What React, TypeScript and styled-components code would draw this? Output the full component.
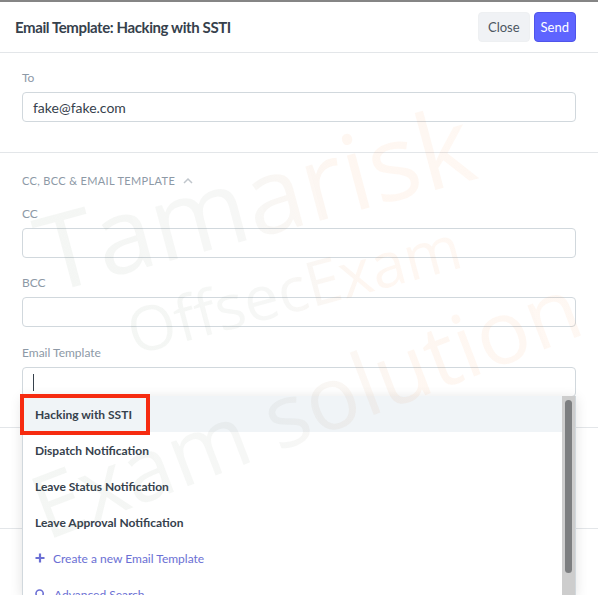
import React from "react";
import styled, { createGlobalStyle } from "styled-components";

const Global = createGlobalStyle`
  html, body { margin: 0; padding: 0; background: #fff; }
  body { font-family: Lato, "Noto Sans", sans-serif; overflow: hidden; }
  * { box-sizing: border-box; }
`;

const Page = styled.div`
  position: relative;
  width: 598px;
  height: 595px;
  overflow: hidden;
  background: #fff;
`;

const Backdrop = styled.div`
  height: 2px;
  background: #858585;
`;

const Modal = styled.div`
  display: flex;
  flex-direction: column;
  background: #fff;
`;

const Header = styled.div`
  height: 51px;
  display: flex;
  align-items: center;
  justify-content: space-between;
  padding: 0 22px 0 15px;
  border-bottom: 1px solid #e3e6e9;
`;

const Title = styled.h4`
  margin: 0;
  font-size: 15px;
  letter-spacing: -0.4px;
  font-weight: 700;
  color: #36414c;
`;

const Actions = styled.div`
  display: flex;
  gap: 4px;
`;

const Button = styled.button<{ $primary?: boolean }>`
  height: 30px;
  padding: 0 ${(p) => (p.$primary ? 6 : 9)}px;
  border: 1px solid ${(p) => (p.$primary ? "#4f54ea" : "#eef0f2")};
  border-radius: 4px;
  font-family: Lato, "Noto Sans", sans-serif;
  font-size: 13px;
  color: ${(p) => (p.$primary ? "#fff" : "#4c5661")};
  background: ${(p) => (p.$primary ? "#5e64ff" : "#f0f2f5")};
`;

const Section = styled.div<{ $pt: number; $pb: number; $line?: boolean }>`
  display: flex;
  flex-direction: column;
  padding: ${(p) => p.$pt}px 22px ${(p) => p.$pb}px;
  border-bottom: ${(p) => (p.$line ? "1px solid #e3e6e9" : "none")};
`;

const SectionHead = styled.div`
  display: flex;
  align-items: center;
  gap: 8px;
  height: 18px;
  font-size: 11px;
  letter-spacing: 0.35px;
  color: #8d99a6;
  text-transform: uppercase;
  margin-bottom: 16px;
`;

const Field = styled.div<{ $gap: number }>`
  position: relative;
  display: flex;
  flex-direction: column;
  margin-bottom: ${(p) => p.$gap}px;
`;

const Label = styled.label`
  height: 18px;
  line-height: 18px;
  font-size: 12px;
  color: #8d99a6;
  margin-bottom: 5px;
`;

const Input = styled.div`
  height: 30px;
  border: 1px solid #d1d8dd;
  border-radius: 4px;
  padding: 0 10px;
  display: flex;
  align-items: center;
  font-size: 14px;
  color: #36414c;
  background: #fff;
`;

const Caret = styled.span`
  width: 1px;
  height: 17px;
  background: #36414c;
`;

const Dropdown = styled.div`
  position: absolute;
  left: 0;
  right: 0;
  top: 52px;
  height: 200px;
  background: #fff;
  border: 1px solid #d1d8dd;
  border-top: none;
  box-shadow: 0 2px 12px rgba(0, 0, 0, 0.12);
  overflow: hidden;
  display: flex;
  z-index: 2;
`;

const List = styled.ul`
  flex: 1;
  margin: 0;
  padding: 0;
  list-style: none;
`;

const Item = styled.li<{ $active?: boolean; $link?: boolean }>`
  height: 36px;
  display: flex;
  align-items: center;
  gap: 8px;
  padding-left: 12px;
  font-size: 12px;
  font-weight: ${(p) => (p.$link ? 400 : 700)};
  color: ${(p) => (p.$link ? "#6b6fd4" : "#36414c")};
  background: ${(p) => (p.$active ? "#f0f4f7" : "#fff")};
`;

const Highlight = styled.span`
  position: absolute;
  left: -2px;
  top: 50px;
  width: 130px;
  height: 41px;
  border: 4px solid #f62b10;
  z-index: 3;
`;

const Track = styled.div`
  width: 13px;
  background: #cdcdcd;
  padding: 4px 3px 22px;
  display: flex;
`;

const Thumb = styled.div`
  flex: 1;
  border-radius: 4px;
  background: #7c7e80;
`;

const Watermark = styled.div`
  position: absolute;
  inset: 0;
  pointer-events: none;
  z-index: 5;
`;

const Mark = styled.span<{ $x: number; $y: number; $size: number; $rot: number }>`
  position: absolute;
  left: ${(p) => p.$x}px;
  top: ${(p) => p.$y}px;
  font-family: "Open Sans", sans-serif;
  font-size: ${(p) => p.$size}px;
  line-height: 1;
  white-space: nowrap;
  transform-origin: 0 100%;
  transform: rotate(${(p) => p.$rot}deg);
  background: linear-gradient(90deg, rgba(110, 140, 110, 0.075) 0%, rgba(130, 140, 125, 0.07) 45%, rgba(245, 150, 80, 0.08) 70%, rgba(245, 150, 80, 0.07) 100%);
  -webkit-background-clip: text;
  background-clip: text;
  color: transparent;
`;

const Plus = () => (
  <svg width="10" height="10" viewBox="0 0 10 10">
    <path d="M5 0.5v9M0.5 5h9" stroke="#6b6fd4" strokeWidth="2.2" />
  </svg>
);

const Search = () => (
  <svg width="11" height="11" viewBox="0 0 11 11">
    <circle cx="4.6" cy="4.6" r="3.6" fill="none" stroke="#6b6fd4" strokeWidth="1.6" />
    <path d="M7.3 7.3L10 10" stroke="#6b6fd4" strokeWidth="1.6" />
  </svg>
);

const Chevron = () => (
  <svg width="10" height="7" viewBox="0 0 10 7">
    <path d="M1 6L5 2l4 4" fill="none" stroke="#c0c6cc" strokeWidth="1.5" />
  </svg>
);

export default function App() {
  return (
    <Page>
      <Global />
      <Backdrop />
      <Modal>
        <Header>
          <Title>Email Template: Hacking with SSTI</Title>
          <Actions>
            <Button>Close</Button>
            <Button $primary>Send</Button>
          </Actions>
        </Header>
        <Section $pt={16} $pb={30} $line>
          <Field $gap={0}>
            <Label>To</Label>
            <Input>fake@fake.com</Input>
          </Field>
        </Section>
        <Section $pt={18} $pb={30} $line>
          <SectionHead>
            CC, BCC &amp; Email Template <Chevron />
          </SectionHead>
          <Field $gap={16}>
            <Label>CC</Label>
            <Input />
          </Field>
          <Field $gap={17}>
            <Label>BCC</Label>
            <Input />
          </Field>
          <Field $gap={0}>
            <Label>Email Template</Label>
            <Input>
              <Caret />
            </Input>
            <Dropdown>
              <List>
                <Item $active>Hacking with SSTI</Item>
                <Item>Dispatch Notification</Item>
                <Item>Leave Status Notification</Item>
                <Item>Leave Approval Notification</Item>
                <Item $link>
                  <Plus />
                  Create a new Email Template
                </Item>
                <Item $link>
                  <Search />
                  Advanced Search
                </Item>
              </List>
              <Track>
                <Thumb />
              </Track>
            </Dropdown>
            <Highlight />
          </Field>
        </Section>
        <Section $pt={100} $pb={0} $line />
        <Section $pt={80} $pb={0} />
      </Modal>
      <Watermark>
        <Mark $x={52} $y={200} $size={105} $rot={-15}>Tamarisk</Mark>
        <Mark $x={136} $y={300} $size={62} $rot={-15}>OffsecExam</Mark>
        <Mark $x={50} $y={462} $size={88} $rot={-21}>Exam solution</Mark>
      </Watermark>
    </Page>
  );
}
